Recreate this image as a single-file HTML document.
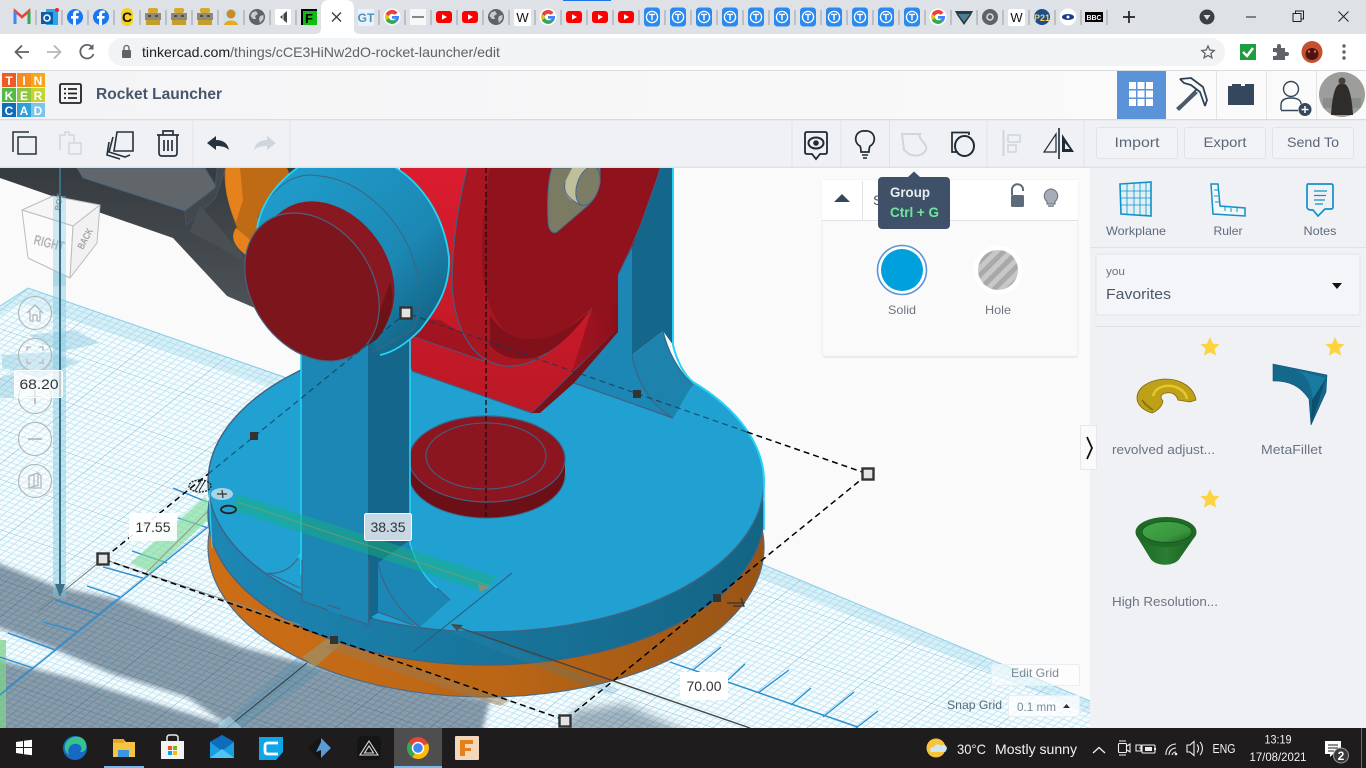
<!DOCTYPE html>
<html><head><meta charset="utf-8"><title>Rocket Launcher</title>
<style>
html,body{margin:0;padding:0;width:1366px;height:768px;overflow:hidden;background:#fafafa}
svg{display:block;position:absolute;left:0;top:0}
text{font-family:"Liberation Sans",sans-serif}
</style></head><body>
<svg width="1366" height="768" viewBox="0 0 1366 768" xmlns="http://www.w3.org/2000/svg">
<defs>
<pattern id="grid" patternUnits="userSpaceOnUse" width="10" height="10" patternTransform="matrix(6.6 2.3 -4.33 3.51 28 288)">
<rect width="10" height="10" fill="#f7fcfe"/>
<g stroke="#bce4f1" stroke-width=".15" fill="none">
<path d="M0 1H10M0 2H10M0 3H10M0 4H10M0 5H10M0 6H10M0 7H10M0 8H10M0 9H10"/>
<path d="M1 0V10M2 0V10M3 0V10M4 0V10M5 0V10M6 0V10M7 0V10M8 0V10M9 0V10"/>
</g>
<path d="M0 0H10M0 0V10" stroke="#74bcd7" stroke-width=".18" fill="none"/>
</pattern>
<pattern id="hatch" patternUnits="userSpaceOnUse" width="10" height="10" patternTransform="rotate(-45)">
<rect width="10" height="10" fill="#a9a9a9"/><rect width="10" height="5" fill="#c8c8c8"/>
</pattern>
<filter id="b3" x="-10%" y="-10%" width="120%" height="120%"><feGaussianBlur stdDeviation="2.500"/></filter>
<filter id="b6" x="-20%" y="-40%" width="140%" height="180%"><feGaussianBlur stdDeviation="5"/></filter>
<linearGradient id="gGray" x1="0" y1="0" x2="0" y2="1"><stop offset="0" stop-color="#363b40"/><stop offset="1" stop-color="#52585c"/></linearGradient>
<linearGradient id="gRim" x1="0" y1="0" x2="1" y2="0"><stop offset="0" stop-color="#1d87b4"/><stop offset=".5" stop-color="#18759c"/><stop offset="1" stop-color="#146484"/></linearGradient>
<linearGradient id="gOr" x1="0" y1="0" x2="1" y2="0"><stop offset="0" stop-color="#cd6e16"/><stop offset=".55" stop-color="#b86515"/><stop offset="1" stop-color="#985416"/></linearGradient>
<linearGradient id="gRed" x1="0" y1="0" x2="0" y2="1"><stop offset="0" stop-color="#da1c2f"/><stop offset="1" stop-color="#bb1825"/></linearGradient>
<linearGradient id="gCorner" x1="0" y1="0" x2="1" y2="0"><stop offset="0" stop-color="#a31420"/><stop offset=".4" stop-color="#9a1320"/><stop offset="1" stop-color="#8a1019"/></linearGradient>
<linearGradient id="gCyl" x1="0" y1="0" x2="1" y2="1"><stop offset="0" stop-color="#20a0d0"/><stop offset=".6" stop-color="#1c88b4"/><stop offset="1" stop-color="#0e5672"/></linearGradient>
<linearGradient id="gHead" x1="0" y1="0" x2="1" y2="0"><stop offset="0" stop-color="#f4f4f6"/><stop offset="1" stop-color="#fbfbfb"/></linearGradient>
<linearGradient id="gCup" x1="0" y1="0" x2="1" y2="0"><stop offset="0" stop-color="#1c6a25"/><stop offset=".5" stop-color="#2a7d31"/><stop offset="1" stop-color="#1a5f22"/></linearGradient>
<linearGradient id="gCupIn" x1="0" y1="0" x2="1" y2="1"><stop offset="0" stop-color="#43a84a"/><stop offset=".65" stop-color="#3a963f"/><stop offset="1" stop-color="#1d5f24"/></linearGradient>

<g id="t"><rect x="-8" y="-9.500" width="16" height="19" rx="3.500" fill="#2b8af0"/><circle r="5.600" fill="none" stroke="#fff" stroke-width="1.300"/><path d="M-3 -2.600H3M0 -2.600V3.200" stroke="#fff" stroke-width="1.400"/></g>
<g id="yt"><rect x="-8" y="-6" width="16" height="12" rx="3" fill="#f00"/><path d="M-2 -2.800L3 0L-2 2.800Z" fill="#fff"/></g>
<g id="g"><circle r="8.500" fill="#fff"/><path d="M5.600 -4.400A7 7 0 0 0 -6.300 -3L-3.200 -.8A3.500 3.500 0 0 1 2.600 -2.200Z" fill="#ea4335"/><path d="M-6.300 -3A7 7 0 0 0 -6.200 3.200L-3 .9A3.500 3.500 0 0 1 -3.200 -.8Z" fill="#fbbc05"/><path d="M-6.200 3.200A7 7 0 0 0 5 4.900L2.400 2.600A3.500 3.500 0 0 1 -3 .9Z" fill="#34a853"/><path d="M7 -1H0V1.800H3.700A3.500 3.500 0 0 1 2.400 2.600L5 4.900A7 7 0 0 0 7 -1Z" fill="#4285f4"/></g>
<g id="globe"><circle r="8" fill="#5f6368"/><path d="M-5 -4.500L-1 -6L1 -3L-2 -1L-1 2L-4 2L-6.500 -1ZM3 -1L6.500 -2L6.500 2L3 6L2 2Z" fill="#c9cbce"/></g>
<g id="rob"><rect x="-5" y="-9" width="10" height="5" rx="2" fill="#d4a92c"/><rect x="-8" y="-4" width="16" height="7" fill="#8d8a78"/><rect x="-7" y="3" width="14" height="5" fill="#c49e2c"/><path d="M-5 -1H-2M2 -1H5" stroke="#3a3a2a" stroke-width="1.400"/></g>
<g id="fb"><circle r="8" fill="#1877f2"/><path d="M1 8V1.600H3.300L3.700 -1H1V-2.700C1 -3.500 1.400 -4 2.300 -4H3.800V-6.300C3 -6.400 2.300 -6.500 1.700 -6.500C-.6 -6.500 -1.900 -5.100 -1.900 -3V-1H-4V1.600H-1.900V8Z" fill="#fff"/></g>
<g id="star"><path d="M0 -10L3 -3.400L9.500 -2.800L4.600 1.800L6 8.600L0 5.200L-6 8.600L-4.600 1.800L-9.500 -2.800L-3 -3.400Z" fill="#fdd33f"/></g>
<g id="h"><rect x="-5.500" y="-5.500" width="11" height="11" fill="#e3e3e3" stroke="#333" stroke-width="2.400"/></g>
<g id="m"><rect x="-4" y="-4" width="8" height="8" fill="#333"/></g>
</defs>

<!-- viewport -->
<rect x="0" y="168" width="1090" height="560" fill="#fafafa"/>
<polygon points="0,306 28,288 287,378 764,565 1090,701 1090,728 0,728" fill="url(#grid)"/>
<polygon points="28,288 287,378 764,565 1090,701 1090,714 764,580 287,392 20,303 0,316 0,306" fill="#8fd0e8" opacity=".3"/>
<path d="M0 306L28 288L287 378L764 565L1090 701" stroke="#8dcfe6" fill="none"/>
<path d="M28 335L75 330L100 343L60 352ZM2 355L50 352L80 362L40 378L2 368ZM0 378L15 372V398L0 398Z" fill="#7fc3dc" opacity=".4"/>
<!-- shadows -->
<g filter="url(#b3)" fill="#8f9dab" style="mix-blend-mode:multiply">
<path d="M-10 560L57 587L120 600L240 647L370 680L490 700L480 740H250L187 697L110 673L57 650L-10 624Z"/>
<path d="M-10 658L67 677L167 707L233 727L240 740H-10Z"/>
</g>
<g filter="url(#b6)" fill="#a9b5bf" style="mix-blend-mode:multiply"><path d="M575 710L625 704L705 740H555Z"/></g>
<rect x="0" y="640" width="6" height="88" fill="#7fd28c" opacity=".75"/>

<!-- ruler ticks -->
<g stroke="#2a8fd2" stroke-width="1.400" fill="none">
<path d="M173 488L207 502M178 518L208 528M132 551L167 563M103 567L143 578M87 586L120 597M55 600L100 615M43 622L78 632M8 633L55 650M0 657L33 668"/>
<path d="M208 527L0 695"/>
<path d="M670 662L858 727M693 670L721 647M728 680L745 664M758 693L789 670M791 705L811 688M823 717L854 692M856 728L878 711"/>
</g>
<polygon points="130,563 205,497 217,512 152,572" fill="#7fdc9a" opacity=".65"/>
<path d="M146 573L212 507" stroke="#8a9a88" stroke-width="1" fill="none"/>
<path d="M103 559L38 612" stroke="#777" stroke-width="1"/>
<rect x="53" y="168" width="13" height="430" fill="#7fc7e2" opacity=".45"/>
<path d="M60 168V594" stroke="#3a6f86" stroke-width="2"/>
<path d="M55 584H65L60 597Z" fill="#3a6f86"/>

<polygon points="300,655 322,670 242,728 218,728" fill="#4d8fb0" opacity=".3"/>
<path d="M307 663L227 728" stroke="#37474f" stroke-width="1.200"/>
<polygon points="220,722 229,716 242,728 218,728" fill="#a8d8ea" opacity=".6"/>

<!-- gray object -->
<polygon points="0,168 0,178 173,238 227,296 262,311 300,345 330,300 310,168" fill="url(#gGray)"/>
<polygon points="77,168 83,178 185,211 217,188 205,168" fill="#60666a" stroke="#3c5f80" stroke-width=".8"/>
<polygon points="185,211 186,225 215,199 226,168 217,168 215,188" fill="#43484c" stroke="#3c5f80" stroke-width=".6"/>
<polygon points="200,205 240,252 245,262 215,245 190,232" fill="#4a4f53"/>
<!-- orange piece -->
<path d="M225 168C223 185 228 205 237 228C230 235 232 245 247 256L300 200L287 168Z" fill="#bf6b15"/>
<path d="M226 168C224 188 228 205 236 222L243 200L240 168Z" fill="#e5821b"/>
<path d="M236 228C231 235 232 245 246 255L250 240Z" fill="#e5821b"/>

<!-- base -->
<ellipse cx="486" cy="547" rx="278" ry="150" fill="url(#gOr)" stroke="#4f6a84" stroke-width="1.200"/>
<polygon points="302,657 328,638 340,645 315,667" fill="#a9854f"/>
<polygon points="335,640 510,700 500,706 325,648" fill="#9a7a50" opacity=".5"/>
<ellipse cx="486" cy="515" rx="278" ry="150" fill="url(#gRim)" stroke="#3f6283" stroke-width="1.200"/>
<ellipse cx="486" cy="482" rx="278" ry="150" fill="#21a0d2" stroke="#3f6283" stroke-width="1.400"/>
<path d="M693 382A278 150 0 0 1 764 482" fill="none" stroke="#25d3f5" stroke-width="2"/>
<path d="M764 480V530" stroke="#25d3f5" stroke-width="1.600"/>
<path d="M209 490L212 548" stroke="#25d3f5" stroke-width="1.200"/>

<!-- plane / right column -->
<polygon points="600,250 632,245 632,355 673,418 574,383 618,328" fill="#1c87b4"/>
<path d="M574 383L673 418" stroke="#3f6283" stroke-width="1.200"/>
<polygon points="632,168 673,168 673,345 663,331 632,355" fill="#14668a"/>
<path d="M632 355L663 331C668 352 678 370 693 385C685 395 680 408 673 418C650 405 636 380 632 355Z" fill="#1d82ac"/>
<path d="M632 355C636 380 650 405 673 418M663 331C668 352 678 370 693 385" fill="none" stroke="#3f6283" stroke-width="1.100"/>
<path d="M673 168V345C677 362 685 376 693 382" fill="none" stroke="#25d3f5" stroke-width="2"/>

<!-- red block -->
<polygon points="400,168 660,168 633,245 618,275 618,328 532,413 412,371 400,336" fill="url(#gRed)"/>
<path d="M412 371L532 413L618 328" fill="none" stroke="#3f5f80" stroke-width="1.200"/>
<polygon points="532,413 618,328 618,332 574,383 540,413" fill="#7a1018"/>
<path d="M412 336L484 361" stroke="#3f5f80" stroke-width="1"/>
<polygon points="412,336 483,360 465,335 440,320 412,318" fill="#8a1019" opacity=".6"/>
<polygon points="592,308 618,275 618,328 572,372" fill="url(#gCorner)"/>
<!-- big wheel -->
<path d="M467 168C458 205 452 245 452 285C454 320 465 345 483 358C493 364 503 367 512 366C530 365 548 355 565 338L592 308L618 275L633 245L660 168Z" fill="#a81622"/>
<path d="M467 168C458 205 452 245 452 285C454 320 465 345 483 358C493 364 503 367 512 366C530 365 548 355 565 338L592 308" fill="none" stroke="#3f5f80" stroke-width="1.200"/>
<path d="M490 168C484 200 482 230 482 258C483 290 490 320 510 335C525 345 545 342 565 330L592 308L618 275L633 245L660 168Z" fill="#8f121c"/>
<path d="M490 345C503 362 530 362 548 352C565 342 580 325 592 308C570 332 540 346 512 336C503 330 496 325 490 315Z" fill="#801019"/>
<polygon points="592,308 618,275 618,300 600,320" fill="#8f121c"/>
<path d="M660 168C650 205 635 240 618 275" stroke="#3f5f80" stroke-width=".8" fill="none"/>
<!-- tan lug -->
<path d="M552 168C548 180 547 200 548 222C549 232 553 234 557 232L586 207C596 200 601 185 600 168Z" fill="#7b7b63" stroke="#46688a" stroke-width="1"/>
<path d="M572 168L565 182C563 192 567 198 573 201L582 206L594 180L590 168Z" fill="#bfbf9c"/>
<ellipse cx="588" cy="186" rx="11" ry="20" transform="rotate(18 588 186)" fill="#7d7d66" stroke="#46688a" stroke-width="1"/>
<path d="M565 182C563 192 567 198 582 206" fill="none" stroke="#46688a"/>

<!-- small disc -->
<path d="M409 459V475A78 43 0 0 0 565 475V459Z" fill="#6c0f16"/>
<ellipse cx="487" cy="459" rx="78" ry="43" fill="#8b1620" stroke="#3f6283" stroke-width="1.200"/>
<ellipse cx="486" cy="456" rx="60" ry="33" fill="none" stroke="#3f6283" stroke-width="1.100"/>
<path d="M409 475A78 43 0 0 0 565 475" fill="none" stroke="#3f6283" stroke-width="1"/>
<path d="M486 168V517" stroke="#2d0a10" stroke-width="1.400" stroke-dasharray="5 3"/>

<path d="M103 559L300 625" stroke="#8b8b8b" stroke-width="1"/>

<path d="M267 573C280 575 292 568 298 558M268 573L300 588" fill="none" stroke="#3f6283" stroke-width="1.100"/>
<path d="M298 558L301 553" stroke="#25d3f5" stroke-width="1.200"/>

<!-- front column -->
<polygon points="301,340 368,340 368,625 302,601" fill="#1c87b4"/>
<polygon points="368,340 410,340 410,540 378,563 378,613 368,622" fill="#14668a"/>
<path d="M378 563L410 540C415 560 425 578 437 588C442 594 447 598 450 600L420 627L378 613Z" fill="#1c87b4"/>
<path d="M378 613L371 617L400 620Z" fill="#21a0d2"/>
<path d="M378 563C384 590 400 612 420 627M378 612L413 625" fill="none" stroke="#3f6283" stroke-width="1.100"/>
<path d="M410 543C415 562 425 578 437 588" fill="none" stroke="#25d3f5" stroke-width="1.400"/>
<path d="M437 588L450 600" stroke="#3f6283" stroke-width="1"/>
<path d="M301 340V575M410 340V545" stroke="#25d3f5" stroke-width="1.600"/>
<path d="M302 560V601L328 610M328 605L340 609M340 615L369 625V560" fill="none" stroke="#3f6283" stroke-width="1.200"/>

<polygon points="237,494 497,577 484,592 232,510" fill="#16b080" opacity=".5"/>
<path d="M237 502L490 586" stroke="#8a9a58" stroke-width="1" opacity=".8"/>
<path d="M478 584L490 587L480 592Z" fill="#7f8f80"/>
<path d="M413 652L512 573" stroke="#2c5c7a" stroke-width="1"/>

<!-- cylinder -->
<path d="M257 228C262 200 280 180 300 166L393 166C425 185 445 220 449 258C450 285 440 305 420 330C410 340 395 352 380 355L372 340L340 345L250 290Z" fill="url(#gCyl)"/>
<path d="M258 218C275 180 300 172 320 176C360 180 395 215 410 250C425 290 420 310 413 330L372 352" fill="none" stroke="#40647f" stroke-width="1"/>
<path d="M257 228C262 200 280 180 300 166M393 166C425 185 445 220 449 258C450 285 440 305 420 330C410 340 395 352 380 355" fill="none" stroke="#25d3f5" stroke-width="1.800"/>
<g fill="#8a1820">
<ellipse cx="328" cy="274" rx="60" ry="78" transform="rotate(-35 328 274)"/>
<ellipse cx="320" cy="281" rx="60" ry="79" transform="rotate(-35 320 281)"/>
</g>
<path d="M376 340C390 325 396 300 390 282L368 345Z" fill="#6e1216"/>
<ellipse cx="312" cy="287" rx="60" ry="80" transform="rotate(-35 312 287)" fill="#7d161c" stroke="#486282" stroke-width="1.200"/>

<!-- selection box -->
<path d="M747 432L868 474L565 720L103 559L208 474" fill="none" stroke="#000" stroke-width="1.500" stroke-dasharray="6 4"/>
<path d="M208 474L406 313L747 432" fill="none" stroke="#143a52" stroke-width="1.200" stroke-dasharray="6 4" opacity=".75"/>
<use href="#h" x="406" y="313"/><use href="#h" x="868" y="474"/><use href="#h" x="565" y="721"/><use href="#h" x="103" y="559"/>
<use href="#m" x="254" y="436"/><use href="#m" x="637" y="394"/><use href="#m" x="717" y="598"/><use href="#m" x="334" y="640"/>

<path d="M457 627L750 728" stroke="#444" stroke-width="1.400"/>
<path d="M451 624L463 625L457 631Z" fill="#444"/>
<polygon points="455,625 620,690 610,695 450,632" fill="#2d8cb0" opacity=".2"/>
<path d="M727 603L745 603M741 598L744 606L733 606" fill="none" stroke="#333" stroke-width="1.300"/>

<ellipse cx="200" cy="486" rx="11" ry="6" fill="none" stroke="#222" stroke-dasharray="2 1.200" stroke-width="1.400"/>
<path d="M195 491L201 481M199 491L205 481" stroke="#222"/>
<ellipse cx="222" cy="494" rx="11" ry="6" fill="#a9d3e2"/>
<path d="M217 494H227M222 490L223 498" stroke="#333" stroke-width="1.200"/>
<ellipse cx="228.500" cy="509.500" rx="7.500" ry="3.800" fill="none" stroke="#222" stroke-width="1.800"/>

<g font-size="14" fill="#333" text-anchor="middle">
<rect x="129" y="513" width="48" height="28" rx="2" fill="#fff" opacity=".9"/>
<text x="153" y="532" textLength="35" lengthAdjust="spacingAndGlyphs">17.55</text>
<rect x="364.500" y="513.500" width="47" height="27" rx="2" fill="#c5d8e3" stroke="#fff" stroke-width="1"/>
<text x="388" y="532" textLength="35" lengthAdjust="spacingAndGlyphs">38.35</text>
<rect x="680" y="672" width="48" height="28" rx="2" fill="#fff"/>
<text x="704" y="691" textLength="35" lengthAdjust="spacingAndGlyphs">70.00</text>
</g>

<!-- view cube -->
<g stroke="#bcbcbc" stroke-width="1" stroke-linejoin="round">
<polygon points="22,210 53,196 100,205 73,226" fill="#f6f6f6"/>
<polygon points="22,210 73,226 70,278 28,258" fill="#fbfbfb"/>
<polygon points="73,226 100,205 97,243 70,278" fill="#f1f1f1"/>
</g>
<text x="33" y="244" font-size="14" font-weight="bold" fill="#b5b5b5" transform="rotate(14 33 244)" textLength="31" lengthAdjust="spacingAndGlyphs">RIGHT</text>
<text x="83" y="250" font-size="10" font-weight="bold" fill="#a5a5a5" transform="rotate(-62 83 250)" textLength="22" lengthAdjust="spacingAndGlyphs">BACK</text>
<text x="60" y="211" font-size="8" font-weight="bold" fill="#8c8c8c" transform="rotate(-80 60 211)">BOT</text>
<rect x="53" y="196" width="13" height="90" fill="#7fc7e2" opacity=".35"/>
<path d="M60 168V290" stroke="#3a6f86" stroke-width="2"/>

<g fill="#fff" fill-opacity=".25" stroke="#adb3b6" stroke-width="1.100">
<circle cx="35" cy="313" r="16.500"/><circle cx="35" cy="355" r="16.500"/><circle cx="35" cy="397" r="16.500"/><circle cx="35" cy="439" r="16.500"/><circle cx="35" cy="481" r="16.500"/>
</g>
<g fill="none" stroke="#b4b8ba" stroke-width="1.300">
<path d="M27 313L35 305L43 313M30 311V321H33V315H37V321H40V311"/>
<path d="M27 351V347H31M39 347H43V351M43 359V363H39M31 363H27V359"/>
<path d="M28 397H42M35 390V404" stroke-width="1.800"/>
<path d="M28 439H42" stroke-width="1.800"/>
<path d="M29 476L38 473V485L29 488ZM38 473L41 476V488H29M34 474V487"/>
</g>
<rect x="14.500" y="370.500" width="48" height="27" rx="2" fill="#fff" fill-opacity=".65" stroke="#fff"/>
<text x="39" y="389" font-size="14" fill="#333" text-anchor="middle" textLength="39" lengthAdjust="spacingAndGlyphs">68.20</text>

<rect x="991.500" y="664.500" width="88" height="21" rx="2" fill="#fff" fill-opacity=".55" stroke="#e8eef2"/>
<text x="1035" y="677" font-size="12" fill="#7c8a98" text-anchor="middle" textLength="48" lengthAdjust="spacingAndGlyphs">Edit Grid</text>
<text x="947" y="709" font-size="12" fill="#5a6a7a" textLength="55" lengthAdjust="spacingAndGlyphs">Snap Grid</text>
<rect x="1008.500" y="695.500" width="71" height="21" rx="2" fill="#fff" fill-opacity=".75" stroke="#e8eef2"/>
<text x="1017" y="711" font-size="12" fill="#7c8a98" textLength="39" lengthAdjust="spacingAndGlyphs">0.1 mm</text>
<path d="M1063 708L1066.500 704L1070 708Z" fill="#333"/>

<!-- inspector -->
<rect x="823" y="183" width="255" height="175" rx="2" fill="#dfe3e8" opacity=".7"/>
<rect x="822" y="180" width="256" height="176" rx="2" fill="#fafafa" stroke="#eceef1"/>
<rect x="822" y="180" width="256" height="40" fill="#fff"/>
<path d="M822 220.500H1078" stroke="#dfe3e8"/>
<path d="M862.500 181V220" stroke="#dfe3e8"/>
<path d="M834 202L842 194L850 202Z" fill="#34475c"/>
<text x="873" y="205" font-size="14" fill="#555">Shape</text>
<path d="M1012 195V190.500A5 5 0 0 1 1023 189V191" fill="none" stroke="#5d6b7b" stroke-width="2"/>
<rect x="1011" y="195" width="13" height="12" rx="1.500" fill="#5d6b7b"/>
<path d="M1051 189A7 7 0 0 0 1047 201.500V204H1055V201.500A7 7 0 0 0 1051 189Z" fill="#a6adb6" stroke="#6f7a86" stroke-width="1.200"/>
<path d="M1048 206H1054" stroke="#6f7a86" stroke-width="1.500"/>
<circle cx="902" cy="270" r="24.500" fill="#fff" stroke="#5b93d9" stroke-width="1.600"/>
<circle cx="902" cy="270" r="21" fill="#00a0dc"/>
<circle cx="998" cy="270" r="24.500" fill="#fff"/>
<circle cx="998" cy="270" r="20" fill="url(#hatch)"/>
<text x="902" y="314" font-size="12" fill="#6d7680" text-anchor="middle" textLength="28" lengthAdjust="spacingAndGlyphs">Solid</text>
<text x="998" y="314" font-size="12" fill="#6d7680" text-anchor="middle" textLength="26" lengthAdjust="spacingAndGlyphs">Hole</text>

<path d="M908 177L914 171.500L920 177Z" fill="#3f5168"/>
<rect x="878" y="177" width="72" height="52" rx="4" fill="#3f5168"/>
<text x="890" y="197" font-size="14" font-weight="bold" fill="#e8edf1" textLength="40" lengthAdjust="spacingAndGlyphs">Group</text>
<text x="890" y="217" font-size="14" font-weight="bold" fill="#6ee79e" textLength="49" lengthAdjust="spacingAndGlyphs">Ctrl + G</text>

<!-- right panel -->
<rect x="1090" y="168" width="276" height="560" fill="#f0f1f4"/>
<!-- panel toggle -->
<rect x="1080.500" y="425.500" width="16" height="44" fill="#fafafa" stroke="#e6e8ec"/>
<path d="M1087 437L1092 448L1087 459" fill="none" stroke="#111" stroke-width="1.800"/>
<path d="M1090 247.500H1366" stroke="#dfe1e5"/>
<g fill="none" stroke="#1390c8" stroke-width="1.300">
<path d="M1120 184L1151 182V216L1121 214Z" fill="#dff0f7" stroke-width="1.600"/>
<path d="M1120 191H1151M1120 198H1151M1120 205H1151M1127 183.500V214.500M1134 183V215M1140 183V215M1146 183V216" stroke-width=".8"/>
</g>
<text x="1136" y="235" font-size="12" fill="#5e6b7e" text-anchor="middle" textLength="60" lengthAdjust="spacingAndGlyphs">Workplane</text>
<path d="M1211 184L1218 184L1220 206L1245 208V216L1213 214Z" fill="#f2f7fa" stroke="#1390c8" stroke-width="1.500"/>
<path d="M1214 190H1218M1214 196H1218M1215 202H1219M1225 211V207M1231 212V208M1237 212V208" stroke="#1390c8"/>
<text x="1228" y="235" font-size="12" fill="#5e6b7e" text-anchor="middle" textLength="29" lengthAdjust="spacingAndGlyphs">Ruler</text>
<path d="M1308 184H1331Q1333 184 1333 186V207Q1333 209 1331 209H1325L1318 216L1313 210H1310Q1307 209 1307 207V186Q1307 184 1308 184Z" fill="none" stroke="#1390c8" stroke-width="1.700"/>
<path d="M1314 191H1327M1314 195.500H1326M1314 200H1325M1315 204H1323" stroke="#1390c8" stroke-width="1.200"/>
<text x="1320" y="235" font-size="12" fill="#5e6b7e" text-anchor="middle" textLength="33" lengthAdjust="spacingAndGlyphs">Notes</text>

<rect x="1096" y="254" width="264" height="61" rx="2" fill="#f4f5f8" stroke="#e2e4e9"/>
<text x="1106" y="275" font-size="11" fill="#6a7280" textLength="19" lengthAdjust="spacingAndGlyphs">you</text>
<text x="1106" y="299" font-size="15" fill="#4d5866" textLength="65" lengthAdjust="spacingAndGlyphs">Favorites</text>
<path d="M1332 283H1342L1337 289Z" fill="#111"/>
<path d="M1095 326.500H1361" stroke="#dfe1e5"/>
<use href="#star" x="1210" y="347"/><use href="#star" x="1335" y="347"/><use href="#star" x="1210" y="499"/>
<path d="M1137 398C1137 388 1148 380 1165 379C1182 379 1194 388 1196 400L1190 402L1178 400C1176 394 1172 392 1166 393C1160 394 1160 398 1163 401C1162 408 1155 412 1152 413C1142 410 1137 404 1137 398Z" fill="#bfa118" stroke="#7c6810" stroke-width=".8"/>
<path d="M1153 396C1155 388 1163 385 1172 386C1180 388 1186 392 1187 399" fill="none" stroke="#e4c82a" stroke-width="2.500"/>
<path d="M1142 400C1146 406 1150 408 1153 410" fill="none" stroke="#8a7410" stroke-width="2"/>
<path d="M1273 364L1327 375L1326 392L1311 425L1309 399C1300 386 1290 381 1273 381Z" fill="#14688c" stroke="#0f5372" stroke-width=".6"/>
<path d="M1295 370C1310 375 1312 390 1313 405L1326 378Z" fill="#1a7ba2"/>
<path d="M1312 400L1326 378L1311 425Z" fill="#0d4f6c"/>
<path d="M1136 535L1150 558C1155 567 1175 567 1180 558L1196 535Z" fill="url(#gCup)"/>
<ellipse cx="1166" cy="532" rx="30.500" ry="15" fill="#1f6a27"/>
<ellipse cx="1167" cy="532" rx="25" ry="10.500" fill="url(#gCupIn)" stroke="#17541e" stroke-width=".8"/>
<text x="1112" y="454" font-size="13" fill="#6a7484" textLength="103" lengthAdjust="spacingAndGlyphs">revolved adjust...</text>
<text x="1261" y="454" font-size="13" fill="#6a7484" textLength="61" lengthAdjust="spacingAndGlyphs">MetaFillet</text>
<text x="1112" y="606" font-size="13" fill="#6a7484" textLength="106" lengthAdjust="spacingAndGlyphs">High Resolution...</text>

<!-- Chrome -->
<rect x="0" y="0" width="1366" height="34" fill="#dee1e6"/>
<rect x="0" y="34" width="1366" height="36" fill="#fff"/>
<rect x="0" y="70" width="1366" height="1" fill="#d9dbde"/>
<rect x="563" y="0" width="48" height="1" fill="#1a73e8"/>
<path d="M315 34C320 34 321 31 321 28V8C321 3 324 0 329 0H346C351 0 354 3 354 8V28C354 31 355 34 360 34Z" fill="#fff"/>
<path d="M332 12.500L341 21.500M341 12.500L332 21.500" stroke="#3c4043" stroke-width="1.400"/>
<g stroke="#9aa0a6" stroke-width="1">
<path d="M36 10V25M62 10V25M88 10V25M114 10V25M140 10V25M166 10V25M192 10V25M218 10V25M244 10V25M270 10V25M296 10V25"/>
<path d="M379 10V25M405 10V25M431 10V25M457 10V25M483 10V25M509 10V25M535 10V25M561 10V25M587 10V25M613 10V25M639 10V25M665 10V25M691 10V25M717 10V25M743 10V25M769 10V25M795 10V25M821 10V25M847 10V25M873 10V25M899 10V25M925 10V25M951 10V25M977 10V25M1003 10V25M1029 10V25M1055 10V25M1081 10V25M1107 10V25"/>
</g>
<path d="M15 24V11L22 17L29 11V24" fill="none" stroke="#ea4335" stroke-width="2.600"/>
<path d="M15 24V11" stroke="#4285f4" stroke-width="3"/><path d="M29 24V11" stroke="#34a853" stroke-width="3"/>
<rect x="46" y="9" width="12" height="16" fill="#28a8ea"/><rect x="41" y="12" width="12" height="12" fill="#0f5ca8"/><circle cx="47" cy="18" r="3" fill="none" stroke="#fff" stroke-width="1.500"/><circle cx="57" cy="10" r="2" fill="#e23"/>
<use href="#fb" x="75" y="17"/><use href="#fb" x="101" y="17"/>
<rect x="121" y="8" width="12" height="18" rx="6" fill="#f4d21f"/><text x="127" y="22" font-size="14" font-weight="bold" font-family="Liberation Serif" text-anchor="middle" fill="#111">C</text>
<use href="#rob" x="153" y="17"/><use href="#rob" x="179" y="17"/><use href="#rob" x="205" y="17"/>
<rect x="223" y="9" width="16" height="16" fill="#cfe3ea"/><circle cx="231" cy="14" r="4.500" fill="#c98a2a"/><path d="M224 25C225 19 237 19 238 25Z" fill="#eba81f"/>
<use href="#globe" x="257" y="17"/>
<rect x="275" y="9" width="16" height="16" rx="2" fill="#fff"/><path d="M280 17L287 11V23Z" fill="#444"/><path d="M283 13V21" stroke="#eee"/>
<rect x="301" y="9" width="16" height="16" fill="#000"/><rect x="303" y="11" width="14" height="14" fill="#0fbf10"/><text x="309" y="23" font-size="13" font-weight="bold" text-anchor="middle" fill="#000">F</text>
<rect x="358" y="9" width="16" height="17" fill="#e8f2f8"/><text x="366" y="22" font-size="12" font-weight="bold" text-anchor="middle" fill="#4a90c2">GT</text>
<use href="#g" x="392" y="17"/>
<rect x="410" y="9" width="16" height="16" fill="#f7f7f7"/><path d="M412 17H424" stroke="#555" stroke-width="1.400"/>
<use href="#yt" x="444" y="17"/><use href="#yt" x="470" y="17"/><use href="#globe" x="496" y="17"/>
<rect x="514" y="9" width="17" height="17" rx="2" fill="#fff"/><text x="522.500" y="22" font-size="13" font-family="Liberation Serif" text-anchor="middle" fill="#111">W</text>
<use href="#g" x="548" y="17"/><use href="#yt" x="574" y="17"/><use href="#yt" x="600" y="17"/><use href="#yt" x="626" y="17"/>
<use href="#t" x="652" y="17"/><use href="#t" x="678" y="17"/><use href="#t" x="704" y="17"/><use href="#t" x="730" y="17"/><use href="#t" x="756" y="17"/><use href="#t" x="782" y="17"/><use href="#t" x="808" y="17"/><use href="#t" x="834" y="17"/><use href="#t" x="860" y="17"/><use href="#t" x="886" y="17"/><use href="#t" x="912" y="17"/>
<use href="#g" x="938" y="17"/>
<path d="M955 11L973 11L971 15L964 25L957 15Z" fill="#2c3a44"/><path d="M958 14H970L964 22Z" fill="#4a8096"/>
<circle cx="990" cy="17" r="8" fill="#5f6368"/><circle cx="990" cy="17" r="3.800" fill="#d4d6d8"/><circle cx="990" cy="17" r="2.200" fill="#5f6368"/>
<rect x="1008" y="9" width="17" height="17" rx="2" fill="#fff"/><text x="1016.500" y="22" font-size="13" font-family="Liberation Serif" text-anchor="middle" fill="#111">W</text>
<circle cx="1042" cy="17" r="8" fill="#1c4d8c"/><text x="1042" y="21" font-size="9" font-weight="bold" text-anchor="middle" fill="#f2d15c">P21</text>
<circle cx="1068" cy="17" r="8.500" fill="#fff"/><ellipse cx="1068" cy="17" rx="6" ry="3" fill="#1c3a8c"/><circle cx="1068" cy="17" r="1.500" fill="#fff"/>
<rect x="1085" y="12" width="18" height="10" fill="#000"/><text x="1094" y="20" font-size="7" font-weight="bold" text-anchor="middle" fill="#fff" textLength="15">BBC</text>
<path d="M1129 11V23M1123 17H1135" stroke="#202124" stroke-width="1.700"/>
<circle cx="1207" cy="17" r="7.500" fill="#3c4043"/><path d="M1203.500 15H1210.500L1207 20Z" fill="#dee1e6"/>
<path d="M1246 17H1256" stroke="#202124"/>
<path d="M1293 13.500H1301V21.500H1293ZM1295.500 13.500V11H1303.500V19H1301" fill="none" stroke="#202124"/>
<path d="M1338.500 11.500L1348.500 21.500M1348.500 11.500L1338.500 21.500" stroke="#202124"/>
<path d="M29 52H16M22 45.500L15.500 52L22 58.500" fill="none" stroke="#5f6368" stroke-width="1.800"/>
<path d="M47 52H60M54 45.500L60.500 52L54 58.500" fill="none" stroke="#b5b8bc" stroke-width="1.800"/>
<path d="M92.500 47.500A6.800 6.800 0 1 0 93.500 54" fill="none" stroke="#5f6368" stroke-width="1.800"/>
<path d="M93.500 44V49.500H88Z" fill="#5f6368"/>
<rect x="108" y="38" width="1117" height="28" rx="14" fill="#f1f3f4"/>
<rect x="122" y="50" width="9" height="8" rx="1" fill="#5f6368"/><path d="M124 50V48A2.500 2.500 0 0 1 129 48V50" fill="none" stroke="#5f6368" stroke-width="1.300"/>
<text x="142" y="57" font-size="14" fill="#202124" textLength="358" lengthAdjust="spacingAndGlyphs">tinkercad.com<tspan fill="#5f6368">/things/cCE3HiNw2dO-rocket-launcher/edit</tspan></text>
<path d="M1208 46L1209.800 50L1214.200 50.500L1211 53.400L1211.900 57.800L1208 55.500L1204.100 57.800L1205 53.400L1201.800 50.500L1206.200 50Z" fill="none" stroke="#5f6368" stroke-width="1.300"/>
<rect x="1240" y="44" width="16" height="16" fill="#1e9e3e"/><path d="M1243 52L1247 56L1253 48" fill="none" stroke="#fff" stroke-width="2.400"/>
<path d="M1273 48H1277V46A2 2 0 0 1 1281 46V48H1285V52H1287A2 2 0 0 1 1287 56H1285V60H1273V56H1275A2 2 0 0 0 1275 52H1273Z" fill="#5f6368"/>
<ellipse cx="1312" cy="52" rx="10.500" ry="11" fill="#c4502c"/><ellipse cx="1312" cy="54" rx="6.500" ry="6" fill="#4a1614"/><path d="M1308 51.500H1310M1314 51.500H1316" stroke="#f66" stroke-width="2"/>
<circle cx="1344" cy="46" r="1.700" fill="#5f6368"/><circle cx="1344" cy="52" r="1.700" fill="#5f6368"/><circle cx="1344" cy="58" r="1.700" fill="#5f6368"/>

<!-- header -->
<rect x="0" y="71" width="1366" height="48" fill="url(#gHead)"/>
<rect x="0" y="119" width="1366" height="1.500" fill="#d8dbe0"/>
<g font-size="12" font-weight="bold" fill="#fff" text-anchor="middle">
<rect x="2" y="73" width="14" height="14" fill="#ef5b25"/><text x="9" y="85">T</text>
<rect x="17" y="73" width="14" height="14" fill="#f68b1f"/><text x="24" y="85">I</text>
<rect x="31" y="73" width="14" height="14" fill="#f9a51a"/><text x="38" y="85">N</text>
<rect x="2" y="88" width="14" height="14" fill="#55b948"/><text x="9" y="100">K</text>
<rect x="17" y="88" width="14" height="14" fill="#8dc63f"/><text x="24" y="100">E</text>
<rect x="31" y="88" width="14" height="14" fill="#c5d432"/><text x="38" y="100">R</text>
<rect x="2" y="103" width="14" height="14" fill="#0f6cb6"/><text x="9" y="115">C</text>
<rect x="17" y="103" width="14" height="14" fill="#2d9fd9"/><text x="24" y="115">A</text>
<rect x="31" y="103" width="14" height="14" fill="#7cc4e8"/><text x="38" y="115">D</text>
</g>
<rect x="60" y="84" width="21" height="19" rx="1.500" fill="none" stroke="#222" stroke-width="1.800"/>
<path d="M64 89H66M68 89H77M64 93.500H66M68 93.500H77M64 98H66M68 98H77" stroke="#222" stroke-width="1.700"/>
<text x="96" y="99" font-size="16" font-weight="bold" fill="#47566a" textLength="126" lengthAdjust="spacingAndGlyphs">Rocket Launcher</text>

<rect x="1117" y="71" width="49" height="48" fill="#5b93d9"/>
<g fill="#fff">
<rect x="1129" y="82" width="7" height="7"/><rect x="1137.500" y="82" width="7" height="7"/><rect x="1146" y="82" width="7" height="7"/>
<rect x="1129" y="90.500" width="7" height="7"/><rect x="1137.500" y="90.500" width="7" height="7"/><rect x="1146" y="90.500" width="7" height="7"/>
<rect x="1129" y="99" width="7" height="7"/><rect x="1137.500" y="99" width="7" height="7"/><rect x="1146" y="99" width="7" height="7"/>
</g>
<path d="M1216.500 71V119M1266.500 71V119M1316.500 71V119" stroke="#e2e4e8"/>
<path d="M1180 79L1191 78L1203 87L1207 100L1205 106L1200 92L1191 85L1184 83ZM1197 89L1178 108" fill="none" stroke="#2f4257" stroke-width="1.800" stroke-linejoin="bevel"/>
<path d="M1195 91L1176 108L1179 111L1198 93Z" fill="#4b5a6a"/>
<path d="M1228 86H1232V84H1241V86H1245V84H1254V105H1228Z" fill="#34475c"/>
<circle cx="1291" cy="89" r="7.500" fill="none" stroke="#34475c" stroke-width="1.400"/>
<path d="M1281 110V105C1281 100 1285 98 1291 98C1297 98 1301 100 1301 104M1281 110.500H1298" fill="none" stroke="#34475c" stroke-width="1.400"/>
<circle cx="1305" cy="109.500" r="6.500" fill="#34475c"/><path d="M1301.500 109.500H1308.500M1305 106V113" stroke="#fff" stroke-width="1.500"/>
<ellipse cx="1342" cy="94.500" rx="23" ry="22.500" fill="#9d9d9b"/>
<path d="M1323 98H1361V108H1323Z" fill="#7f8281" opacity=".6"/>
<path d="M1337 86C1334 90 1332 100 1331 115H1353C1352 100 1350 90 1347 86L1345 84H1339Z" fill="#2f2d2a"/>
<circle cx="1342" cy="81" r="3.500" fill="#4a3d34"/>

<!-- toolbar -->
<rect x="0" y="121" width="1366" height="47" fill="#f0f1f4"/>
<rect x="0" y="166.500" width="1366" height="1.500" fill="#e0e2e6"/>
<path d="M193 121V167M290 121V167M792 121V167M841 121V167M889.500 121V167M987 121V167M1084 121V167" stroke="#e0e2e6"/>
<path d="M13 152V132H29M18 137H36V154H18Z" fill="#f0f1f4" stroke="#26323d" stroke-width="1.500"/>
<g fill="none" stroke="#cfd8e0" stroke-width="1.500"><path d="M60 150V135H65V132H69V135H74V142"/><rect x="69" y="143" width="12" height="11"/></g>
<path d="M117 132H133V151H114ZM113 137L109 152L125 157L130 155M109 142L107 155L120 159" fill="none" stroke="#26323d" stroke-width="1.600"/>
<path d="M157 135H179M163 135V131H173V135M159 135V153Q159 156 162 156H174Q177 156 177 153V135M164 140V151M168 140V151M172 140V151" fill="none" stroke="#26323d" stroke-width="1.700"/>
<path d="M207 143L216 136V140C224 140 228 144 229 150C226 147 222 146 216 146V150Z" fill="#26323d"/>
<path d="M276 143L267 136V140C259 140 255 144 254 150C257 147 261 146 267 146V150Z" fill="#cdd6df"/>
<path d="M807 132H825Q827 132 827 134V152Q827 154 825 154H820L816 159L812 154H807Q805 154 805 152V134Q805 132 807 132Z" fill="none" stroke="#1f2b35" stroke-width="1.800"/>
<ellipse cx="816" cy="143" rx="7.500" ry="5.500" fill="none" stroke="#1f2b35" stroke-width="2"/>
<circle cx="816" cy="143" r="2.800" fill="#1f2b35"/>
<path d="M865 131A8 8 0 0 0 860 146C861 148 861 150 861 152H869C869 150 869 148 870 146A8 8 0 0 0 865 131Z" fill="none" stroke="#1f2b35" stroke-width="1.700"/>
<path d="M862 155H868M863 158H867" stroke="#1f2b35" stroke-width="1.600"/>
<path d="M902 134H920C918 138 924 142 926 146C928 154 916 158 909 154L904 150Z" fill="none" stroke="#cdd6df" stroke-width="2"/>
<path d="M969 135V132.500H952V152H958" fill="none" stroke="#1f2b35" stroke-width="1.700"/>
<ellipse cx="964.500" cy="146" rx="9.500" ry="10" fill="none" stroke="#1f2b35" stroke-width="2"/>
<path d="M1003.500 130V156" stroke="#cdd6df" stroke-width="2"/>
<g fill="none" stroke="#cdd6df" stroke-width="1.500"><rect x="1008" y="135" width="12" height="7"/><rect x="1008" y="145" width="8" height="7"/></g>
<path d="M1059 128V159" stroke="#1f2b35" stroke-width="1.600"/>
<path d="M1056 134V152H1044Z" fill="none" stroke="#1f2b35" stroke-width="1.200"/>
<path d="M1062 134V152H1074Z" fill="#1f2b35"/><path d="M1065 143V149H1070Z" fill="#f0f1f4"/>
<g fill="#f2f3f6" stroke="#e1e3e7"><rect x="1096.500" y="127.500" width="81" height="31" rx="3"/><rect x="1184.500" y="127.500" width="81" height="31" rx="3"/><rect x="1272.500" y="127.500" width="81" height="31" rx="3"/></g>
<g font-size="14" fill="#5a6778" text-anchor="middle">
<text x="1137" y="147" textLength="45" lengthAdjust="spacingAndGlyphs">Import</text>
<text x="1225" y="147" textLength="43" lengthAdjust="spacingAndGlyphs">Export</text>
<text x="1313" y="147" textLength="52" lengthAdjust="spacingAndGlyphs">Send To</text>
</g>

<!-- taskbar -->
<rect x="0" y="728" width="1366" height="40" fill="#1e1c1d"/>
<path d="M16 742L23 741V747H16ZM24 740.800L32 739.700V747H24ZM16 748H23V754L16 753ZM24 748H32V755.300L24 754.200Z" fill="#fff"/>
<circle cx="75" cy="748" r="12" fill="#1669c4"/>
<path d="M65 745C67 737 80 733 85 741C88 746 86 753 80 752C84 747 79 743 74 744C69 745 67 750 69 755C66 753 64 749 65 745Z" fill="#35c48d"/>
<path d="M113 740H124L126 742H135V757H113Z" fill="#f6c344"/><rect x="113" y="739" width="11" height="4" fill="#e2a81f"/><rect x="118" y="750" width="11" height="7" fill="#3a96dd"/>
<rect x="104" y="766" width="40" height="2" fill="#76b9ed"/>
<path d="M161 741H184V759H161Z" fill="#f3f3f3"/><path d="M167 741V737A3 3 0 0 1 170 735H175A3 3 0 0 1 178 737V741" fill="none" stroke="#e9e9e9" stroke-width="1.500"/>
<rect x="168" y="746" width="4" height="4" fill="#f25022"/><rect x="173" y="746" width="4" height="4" fill="#7fba00"/><rect x="168" y="751" width="4" height="4" fill="#00a4ef"/><rect x="173" y="751" width="4" height="4" fill="#ffb900"/>
<path d="M210 742L222 735L234 742V758H210Z" fill="#1b9de2"/><path d="M210 742L222 751L234 742L222 735Z" fill="#0f6cbd"/><path d="M210 758L222 749L234 758Z" fill="#50c5f5"/>
<path d="M259 737H283V752L276 760H259Z" fill="#0ea5e9"/><path d="M278 743H268Q265 743 265 746V751Q265 754 268 754H278" fill="none" stroke="#fff" stroke-width="2.800"/>
<path d="M320 737L332 748L320 760L308 748Z" fill="#151515"/><path d="M321 738L331 748L321 758V750L316 752L321 742Z" fill="#5b9bd5"/>
<rect x="357" y="736" width="24" height="24" rx="5" fill="#151515"/><path d="M369 741L378 755H360ZM369 746L373.500 753H364.500Z" fill="none" stroke="#ddd" stroke-width="1.100"/>
<rect x="394" y="728" width="48" height="40" fill="#4e4e4e"/><rect x="394" y="766" width="48" height="2" fill="#76b9ed"/>
<circle cx="418" cy="748" r="11" fill="#ea4335"/>
<path d="M418 748L412.500 757.500A11 11 0 0 1 408.500 742.500Z" fill="#34a853"/>
<path d="M418 748L428 743.500A11 11 0 0 1 412.500 757.500Z" fill="#fbbc05"/>
<circle cx="418" cy="748" r="5.500" fill="#4285f4" stroke="#fff" stroke-width="1.500"/>
<rect x="455" y="736" width="24" height="24" rx="1" fill="#f2d8b8"/>
<path d="M460 740H473V744H465V748H471V751H465V756H460Z" fill="#e6801e"/>
<circle cx="936" cy="748" r="9.500" fill="#f9c33c"/><path d="M931 752A3 3 0 0 1 934 747A4 4 0 0 1 941 746A3 3 0 0 1 946 750.500Q946 752 944 752Z" fill="#cfe6f5"/>
<g fill="#f2f2f2" font-size="14">
<text x="957" y="754" textLength="29" lengthAdjust="spacingAndGlyphs">30°C</text>
<text x="995" y="754" textLength="82" lengthAdjust="spacingAndGlyphs">Mostly sunny</text>
</g>
<path d="M1093 753L1099 747.500L1105 753" fill="none" stroke="#f2f2f2" stroke-width="1.300"/>
<g fill="none" stroke="#efefef" stroke-width="1.100">
<rect x="1118.500" y="743.500" width="8" height="9" rx="1"/><path d="M1127 746L1130 744V752L1127 750M1119 741H1126M1119 755H1126"/>
<rect x="1142" y="745" width="13" height="8" rx="1"/><path d="M1139 748H1142M1136 745H1141V751H1136Z"/><path d="M1155 748V750" stroke-width="2"/>
<path d="M1166 755A10 10 0 0 1 1176 744M1169 755A7 7 0 0 1 1176 748M1172 755A4 4 0 0 1 1176 752"/>
<path d="M1187 745H1190L1194 741.500V755.500L1190 752H1187ZM1197 744.500A6 6 0 0 1 1197 752.500M1200 742A10 10 0 0 1 1200 755"/>
</g>
<circle cx="1176" cy="754" r="1.300" fill="#efefef"/>
<rect x="1145" y="747" width="7" height="4" fill="#efefef"/>
<text x="1224" y="753" font-size="13" fill="#f2f2f2" text-anchor="middle" textLength="23" lengthAdjust="spacingAndGlyphs">ENG</text>
<text x="1278" y="743.500" font-size="12" fill="#f2f2f2" text-anchor="middle" textLength="27" lengthAdjust="spacingAndGlyphs">13:19</text>
<text x="1278" y="761" font-size="12" fill="#f2f2f2" text-anchor="middle" textLength="57" lengthAdjust="spacingAndGlyphs">17/08/2021</text>
<path d="M1325 741H1341V754H1333L1330 757V754H1325Z" fill="#fff"/>
<path d="M1328 745H1338M1328 748H1338M1328 751H1334" stroke="#1e1c1d"/>
<circle cx="1341" cy="755.500" r="7.500" fill="#3a3a3a" stroke="#9a9a9a"/>
<text x="1341" y="760" font-size="12" font-weight="bold" fill="#fff" text-anchor="middle">2</text>
<path d="M1361.500 728V768" stroke="#6a6a6a"/>
</svg>
</body></html>
